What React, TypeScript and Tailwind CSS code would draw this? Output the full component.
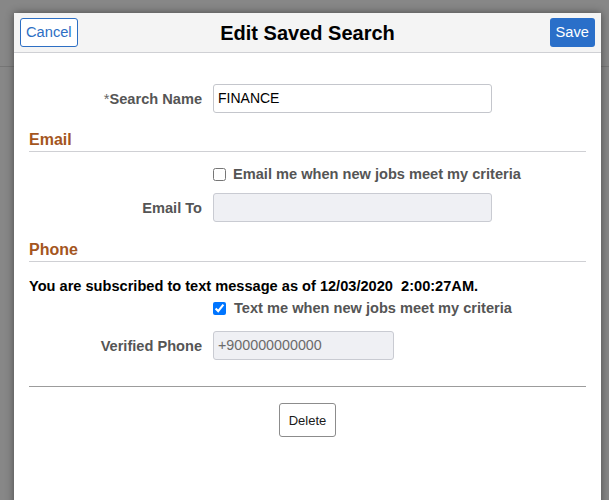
import React from "react";

const font = { fontFamily: '"Liberation Sans", Arial, sans-serif' };

function Label({ children }: { children: React.ReactNode }) {
  return (
    <div className="w-[173px] shrink-0 text-right pr-0 text-[14.6px] font-bold leading-[18px] text-[#555]">
      {children}
    </div>
  );
}

export default function App() {
  return (
    <div
      className="relative w-[609px] h-[500px] overflow-hidden bg-[#878787]"
      style={font}
    >
      <div className="absolute left-0 right-0 top-[66px] h-px bg-[#767676]" />
      <div className="absolute left-[14px] top-[13px] w-[587px] h-[520px] bg-white shadow-[0_0_8px_rgba(0,0,0,0.45)] flex flex-col">
        {/* header */}
        <div className="h-[40px] shrink-0 bg-[#f4f4f4] border-b border-[#cfd0d4] grid grid-cols-[1fr_auto_1fr] items-center px-[6px]">
          <div className="flex">
            <button className="h-[29px] px-[5px] border border-[#2d6fc4] rounded-[3px] bg-white text-[#2d6fc4] text-[14.67px] leading-none">
              Cancel
            </button>
          </div>
          <div className="text-[20px] font-bold text-black leading-none">
            Edit Saved Search
          </div>
          <div className="flex justify-end">
            <button className="h-[29px] px-[6px] rounded-[3px] bg-[#2a6fc9] text-white text-[14.67px] leading-none">
              Save
            </button>
          </div>
        </div>

        {/* body */}
        <div className="px-[15px] flex flex-col">
          {/* Search name */}
          <div className="mt-[31px] flex items-center">
            <Label>
              <span className="font-normal text-[#666]">*</span>Search Name
            </Label>
            <div className="ml-[11px] w-[279px] h-[29px] border border-[#c4c6cc] rounded-[3px] bg-white flex items-center px-[4px] text-[14px] text-black">
              FINANCE
            </div>
          </div>

          {/* Email heading */}
          <div className="mt-[18px] pb-[2px] border-b border-[#cfd0d4] text-[16px] leading-[18px] font-bold text-[#a4561e]">
            Email
          </div>

          <div className="mt-[12px] h-[20px] flex items-center">
            <div className="w-[173px] shrink-0" />
            <input
              type="checkbox"
              className="ml-[11px] m-0 w-[13px] h-[13px]"
              readOnly
            />
            <span className="ml-[7px] text-[14.6px] font-bold leading-[18px] text-[#555]">
              Email me when new jobs meet my criteria
            </span>
          </div>

          <div className="mt-[9px] flex items-center">
            <Label>Email To</Label>
            <div className="ml-[11px] w-[279px] h-[29px] border border-[#c9cbd2] rounded-[3px] bg-[#eff0f4]" />
          </div>

          {/* Phone heading */}
          <div className="mt-[19px] pb-[2px] border-b border-[#cfd0d4] text-[16px] leading-[18px] font-bold text-[#a4561e]">
            Phone
          </div>

          <div className="mt-[15px] text-[14.6px] font-bold leading-[18px] text-black whitespace-pre">
            You are subscribed to text message as of 12/03/2020  2:00:27AM.
          </div>

          <div className="mt-[3px] h-[20px] flex items-center">
            <div className="w-[173px] shrink-0" />
            <input
              type="checkbox"
              defaultChecked
              className="ml-[11px] m-0 w-[13px] h-[13px]"
            />
            <span className="ml-[8px] text-[14.6px] font-bold leading-[18px] text-[#555]">
              Text me when new jobs meet my criteria
            </span>
          </div>

          <div className="mt-[13px] flex items-center">
            <Label>Verified Phone</Label>
            <div className="ml-[11px] w-[181px] h-[29px] border border-[#c9cbd2] rounded-[3px] bg-[#eff0f4] flex items-center px-[4px] text-[14.3px] text-[#6b6b6b]">
              +900000000000
            </div>
          </div>

          <div className="mt-[26px] h-px bg-[#9c9c9c]" />

          <div className="mt-[16px] flex justify-center">
            <button className="h-[34px] px-[9px] border border-[#8c8c8c] rounded-[3px] bg-white text-[13px] text-[#1a1a1a] leading-none">
              Delete
            </button>
          </div>
        </div>
      </div>
    </div>
  );
}
